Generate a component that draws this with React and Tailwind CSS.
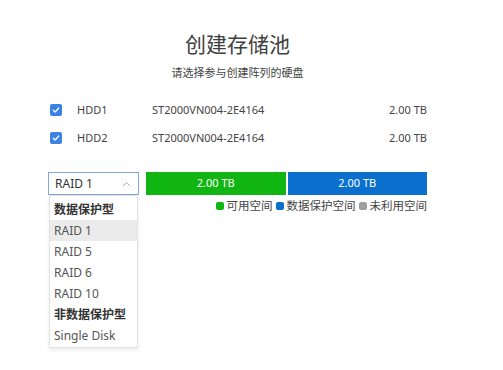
import React, { useState } from 'react'

const disks = [
  { name: 'HDD1', model: 'ST2000VN004-2E4164', size: '2.00 TB' },
  { name: 'HDD2', model: 'ST2000VN004-2E4164', size: '2.00 TB' },
]

const options = [
  { label: '数据保护型', group: true },
  { label: 'RAID 1', active: true },
  { label: 'RAID 5' },
  { label: 'RAID 6' },
  { label: 'RAID 10' },
  { label: '非数据保护型', group: true },
  { label: 'Single Disk' },
]

function Check() {
  return (
    <span className="w-[12px] h-[12px] rounded-[2px] bg-[#3b82e6] flex items-center justify-center">
      <svg width="8" height="8" viewBox="0 0 8 8" fill="none">
        <path d="M1.3 4.2 L3.2 6 L6.7 2" stroke="#ffffff" strokeWidth="1.3" strokeLinecap="round" strokeLinejoin="round" />
      </svg>
    </span>
  )
}

export default function App() {
  const [selected] = useState('RAID 1')

  return (
    <div
      className="w-[503px] h-[370px] bg-white text-[#333] overflow-hidden"
      style={{ fontFamily: '"Noto Sans", "Noto Sans CJK SC", sans-serif' }}
    >
      <div className="ml-[48px] w-[379px] pt-[29px]">
        <h1 className="text-center text-[21px] leading-[30px] text-[#404040] font-normal">创建存储池</h1>
        <p className="text-center text-[11px] leading-[16px] mt-[6px] text-[#444]">请选择参与创建阵列的硬盘</p>

        <div className="mt-[15px] flex flex-col">
          {disks.map(d => (
            <div key={d.name} className="h-[28px] flex items-center text-[11px] text-[#444]">
              <span className="ml-[2px]"><Check /></span>
              <span className="ml-[15px] w-[75px]">{d.name}</span>
              <span className="flex-1">{d.model}</span>
              <span>{d.size}</span>
            </div>
          ))}
        </div>

        <div className="mt-[20px] flex gap-[7px]">
          <div className="relative w-[91px] shrink-0">
            <div className="h-[23px] border border-[#7fa9d9] flex items-center justify-between px-[6px] text-[12px] text-[#333]">
              <span>{selected}</span>
              <svg width="9" height="6" viewBox="0 0 9 6" fill="none" className="mr-[1px]">
                <path d="M1 5 L4.5 1.5 L8 5" stroke="#b0b0b0" strokeWidth="1" />
              </svg>
            </div>
            <div className="absolute left-[1px] top-[23px] w-[89px] bg-white border border-[#e2e2e2] shadow-[0_2px_4px_rgba(0,0,0,0.08)] pt-[3px] pb-[1px]">
              {options.map(o => (
                <div
                  key={o.label}
                  className={
                    'h-[21px] flex items-center px-[4px] text-[12px] ' +
                    (o.group ? 'font-bold text-[#333] ' : 'text-[#555] ') +
                    (o.active ? 'bg-[#ebebeb]' : '')
                  }
                >
                  {o.label}
                </div>
              ))}
            </div>
          </div>

          <div className="flex-1 flex flex-col">
            <div className="flex h-[23px] gap-[2px] text-[11px] text-white">
              <div className="flex-1 bg-[#12b612] flex items-center justify-center">2.00 TB</div>
              <div className="flex-1 bg-[#0a6fcd] flex items-center justify-center">2.00 TB</div>
            </div>
            <div className="flex justify-end items-center gap-[3px] mt-[3px] text-[11.5px] text-[#444] leading-[16px]">
              <span className="flex items-center gap-[3px]">
                <span className="w-[8px] h-[8px] rounded-[2px] bg-[#12b612]" />可用空间
              </span>
              <span className="flex items-center gap-[3px]">
                <span className="w-[8px] h-[8px] rounded-[2px] bg-[#0a6fcd]" />数据保护空间
              </span>
              <span className="flex items-center gap-[3px]">
                <span className="w-[8px] h-[8px] rounded-[2px] bg-[#9e9e9e]" />未利用空间
              </span>
            </div>
          </div>
        </div>
      </div>
    </div>
  )
}
